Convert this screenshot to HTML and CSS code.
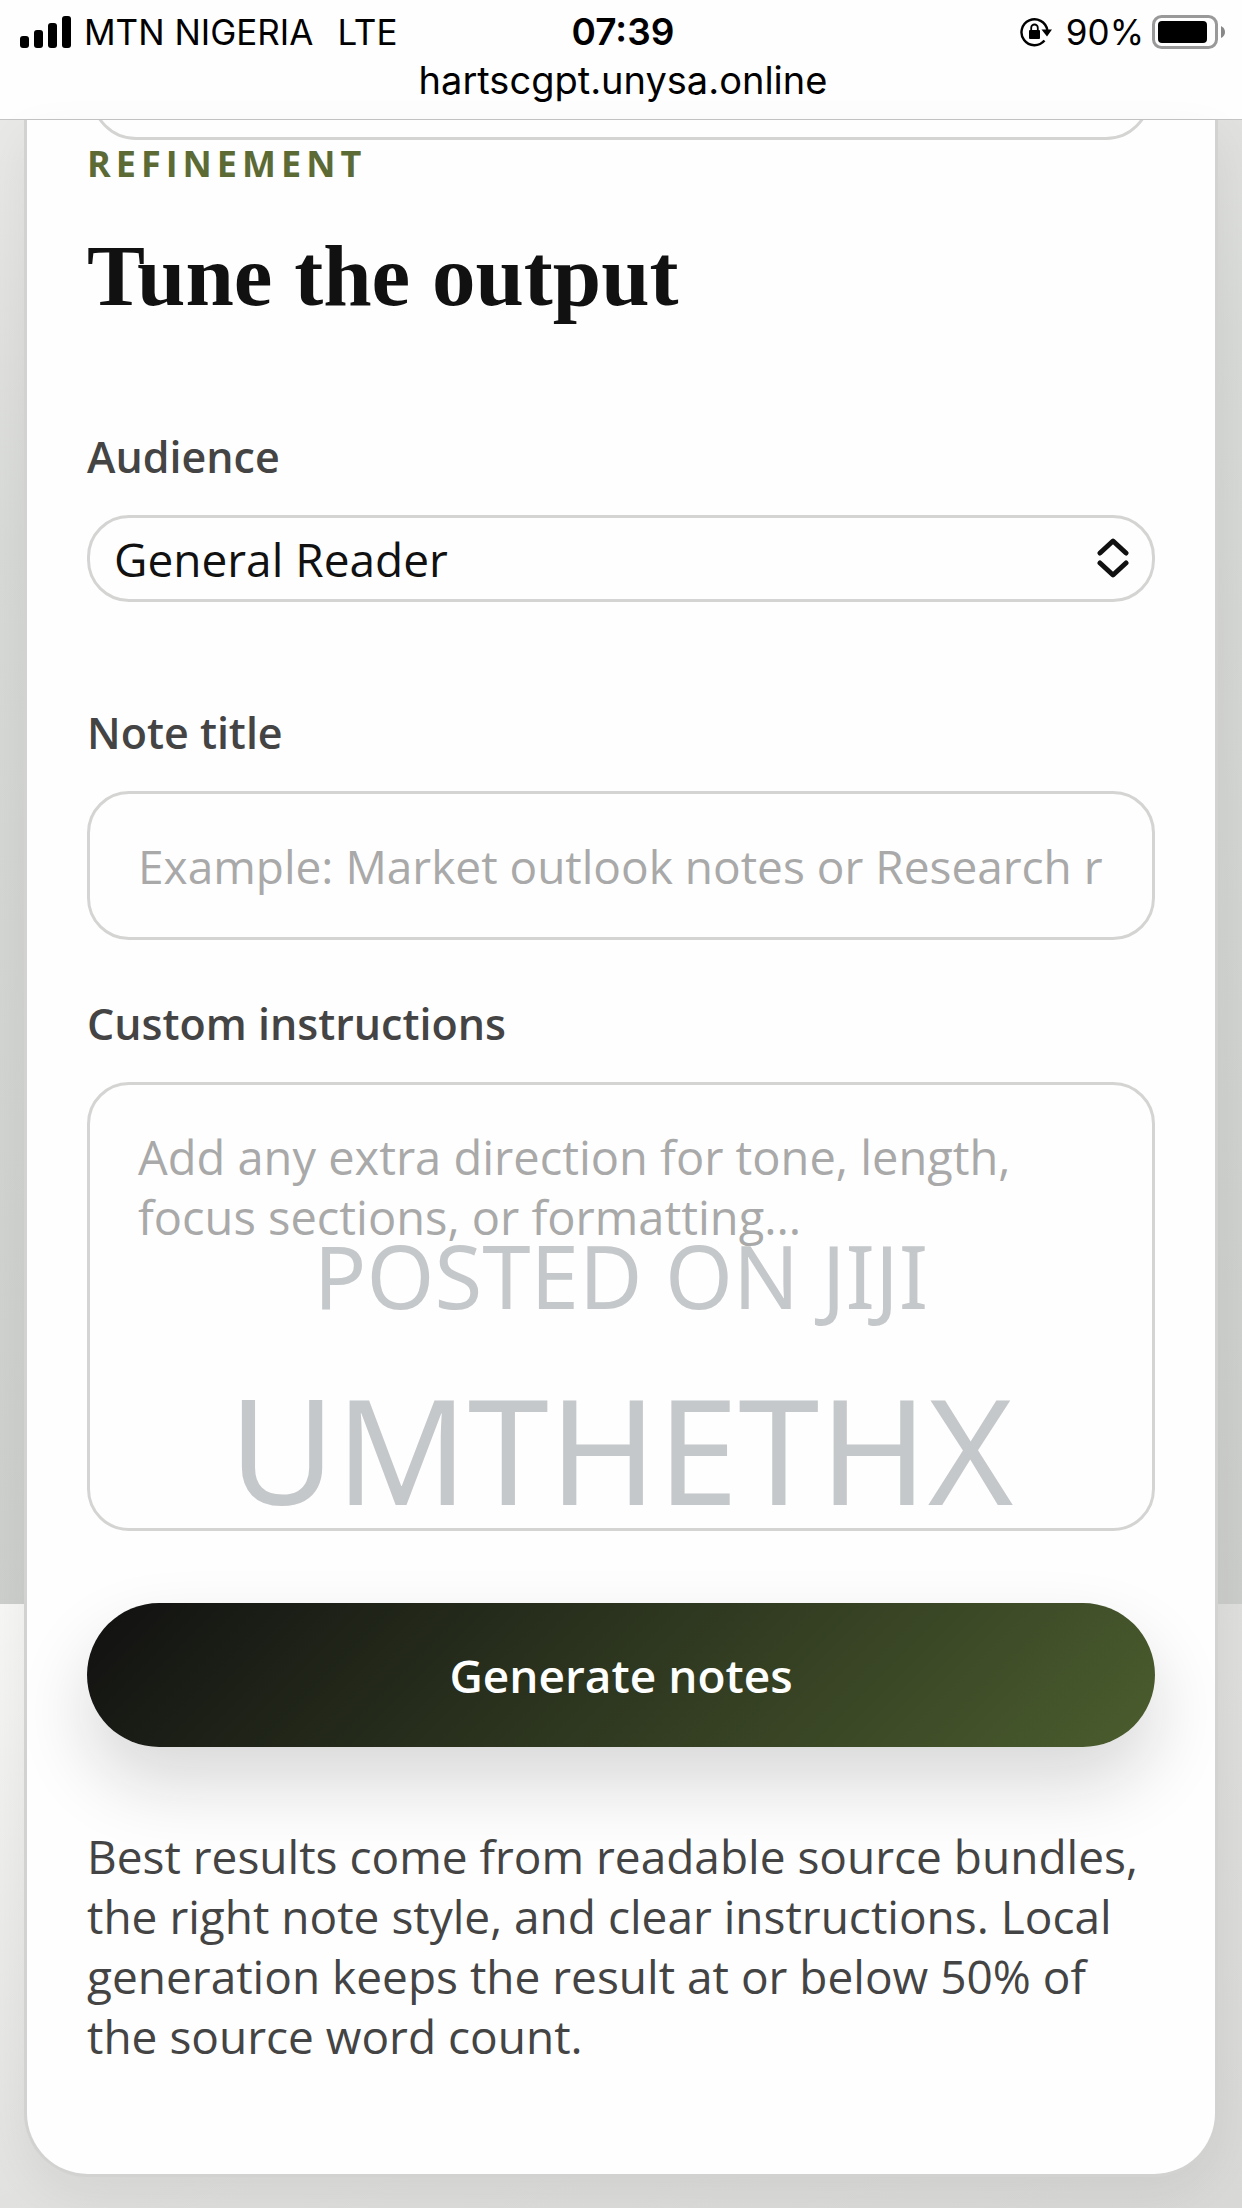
FILE: index.html
```html
<!DOCTYPE html>
<html lang="en">
<head>
    <meta charset="UTF-8">
    <title>Tune the output</title>
    <meta name="viewport" content="width=device-width,initial-scale=1.0">
    <link rel="stylesheet" href="styles.css">
</head>
<body>
    <header class="status">
        <div class="status_row">
            <div class="status_side">
                <svg class="signal" viewBox="0 0 52 32" aria-hidden="true">
                    <rect x="0" y="20" width="9" height="12" rx="3"/>
                    <rect x="14" y="14" width="9" height="18" rx="3"/>
                    <rect x="28" y="7" width="9" height="25" rx="3"/>
                    <rect x="42" y="0" width="9" height="32" rx="3"/>
                </svg>
                <span>MTN NIGERIA</span>
                <span class="network">LTE</span>
            </div>
            <div class="clock">07:39</div>
            <div class="status_side status_right">
                <svg class="lock" viewBox="0 0 32 30" aria-hidden="true">
                    <path d="M24.5 23.6A13 13 0 1 1 27.3 13" fill="none" stroke="#000" stroke-width="2.4"/>
                    <path d="M21.5 12.5h10.5l-5 7z"/>
                    <rect x="9" y="13" width="11" height="9" rx="1"/>
                    <path d="M11.2 13.5v-2.7a3.3 3.3 0 0 1 6.6 0v2.7" fill="none" stroke="#000" stroke-width="1.8"/>
                </svg>
                <span class="percent">90%</span>
                <svg class="battery" viewBox="0 0 74 34" aria-hidden="true">
                    <rect x="1.5" y="1.5" width="63" height="31" rx="8" fill="none" stroke="#999" stroke-width="3"/>
                    <rect x="6" y="6" width="49" height="22" rx="4"/>
                    <path d="M69 11q4 2 4 6t-4 6z" fill="#888"/>
                </svg>
            </div>
        </div>
        <div class="url">hartscgpt.unysa.online</div>
    </header>
    <main class="page">
        <section class="card">
            <div class="box_end"></div>
            <p class="eyebrow">REFINEMENT</p>
            <h1 class="title">Tune the output</h1>
            <form class="form">
                <label class="label" for="audience">Audience</label>
                <div class="select_wrap">
                    <select class="field select" id="audience">
                        <option>General Reader</option>
                    </select>
                    <svg class="arrows" viewBox="0 0 32 42" aria-hidden="true">
                        <path d="M3 16L16 4l13 12M3 26l13 12 13-12"/>
                    </svg>
                </div>
                <label class="label" for="note">Note title</label>
                <input class="field input" id="note" type="text" placeholder="Example: Market outlook notes or Research recap">
                <label class="label" for="custom">Custom instructions</label>
                <div class="area_wrap">
                    <textarea class="field area" id="custom" placeholder="Add any extra direction for tone, length, focus sections, or formatting..."></textarea>
                    <div class="mark">
                        <span class="mark_small">POSTED ON JIJI</span>
                        <span class="mark_big">UMTHETHX</span>
                    </div>
                </div>
                <button class="generate" type="button">Generate notes</button>
            </form>
            <p class="help">Best results come from readable source bundles, the right note style, and clear instructions. Local generation keeps the result at or below 50% of the source word count.</p>
        </section>
    </main>
</body>
</html>
```
FILE: styles.css
```css
*{
    box-sizing:border-box;
}
body{
    margin:0;
    min-height:100vh;
    font-family:"Trebuchet MS", "Open Sans", sans-serif;
    font-size:46px;
    line-height:60px;
    color:#444;
    background:linear-gradient(170deg, #e8e8e6 8%, #d8dad7 30%, #cbcdca 100%) 0 0/100% 1604px no-repeat,
        linear-gradient(150deg, #f7f7f6 0%, #dfdfdd 50%, #d8d8d6 100%) 0 1604px/100% 604px no-repeat,
        #d8d8d6;
    border-bottom:2px solid #b8b8b7;
}
.status{
    height:120px;
    padding:8px 16px 0 20px;
    background:#fefefe;
    border-bottom:1px solid #c4c4c4;
    font-family:Inter, sans-serif;
    color:#000;
}
.status_row{
    display:grid;
    grid-template-columns:1fr auto 1fr;
    font-size:35px;
    line-height:48px;
}
.status_side{
    display:flex;
    align-items:center;
}
.status_right{
    justify-content:flex-end;
}
.signal{
    width:52px;
    height:32px;
    margin-right:12px;
}
.network{
    margin-left:24px;
}
.clock{
    font-size:37px;
    font-weight:600;
}
.lock{
    width:32px;
    height:30px;
    margin-right:14px;
}
.percent{
    margin-right:8px;
}
.battery{
    width:74px;
    height:34px;
}
.url{
    font-size:38px;
    line-height:48px;
    text-align:center;
}
.page{
    padding:0 24px 32px;
}
.card{
    padding:0 60px 108px;
    background:#fefefe;
    border:3px solid #d2d3d1;
    border-top:0;
    border-radius:0 0 64px 64px;
    box-shadow:0 16px 48px rgba(0,0,0,.06);
    overflow:hidden;
}
/* lower edge of the panel above, the rest is scrolled away */
.box_end{
    height:90px;
    margin:-70px 4px 0;
    border:3px solid #d4d5d3;
    border-radius:48px;
    clip-path:inset(70px 0 0 0);
}
.eyebrow{
    margin:0;
    font-size:36px;
    line-height:48px;
    font-weight:700;
    letter-spacing:5px;
    color:#5c6b35;
}
.title{
    margin:40px 0 103px;
    font-family:Georgia, "Liberation Serif", serif;
    font-size:87px;
    line-height:96px;
    font-weight:700;
    color:#111;
}
.form{
    display:flex;
    flex-direction:column;
}
.label{
    font-size:43px;
    font-weight:600;
    margin-bottom:28px;
}
.field{
    display:block;
    width:100%;
    margin:0;
    border:3px solid #d4d5d3;
    border-radius:42px;
    background:#fefefe;
    font:inherit;
    color:#111;
}
.field::placeholder{
    color:#a9a9a9;
    opacity:1;
}
.select_wrap{
    position:relative;
    margin-bottom:101px;
}
.select{
    height:87px;
    padding:0 24px;
    appearance:none;
}
.arrows{
    position:absolute;
    right:26px;
    top:22px;
    width:32px;
    height:42px;
    fill:none;
    stroke:#111;
    stroke-width:5;
    stroke-linecap:round;
    stroke-linejoin:round;
    pointer-events:none;
}
.input{
    height:149px;
    padding:0 48px;
    margin-bottom:54px;
}
.area_wrap{
    position:relative;
}
.area{
    height:449px;
    padding:42px 48px;
    font-size:47px;
    resize:none;
}
/* watermark over the text box */
.mark{
    position:absolute;
    left:0;
    right:0;
    bottom:0;
    display:flex;
    flex-direction:column;
    align-items:center;
    gap:32px;
    font-family:"Noto Sans", sans-serif;
    color:#c5c8ca;
    pointer-events:none;
}
.mark_small{
    font-size:87px;
    line-height:120px;
}
.mark_big{
    font-size:146px;
    line-height:164px;
}
.generate{
    height:144px;
    margin-top:72px;
    border:0;
    border-radius:72px;
    background:linear-gradient(135deg, #111 0%, #4b5d2e 100%);
    box-shadow:0 36px 72px rgba(17,17,17,.16);
    font:inherit;
    font-weight:600;
    color:#fff;
}
.help{
    margin:79px 0 0;
}
```
